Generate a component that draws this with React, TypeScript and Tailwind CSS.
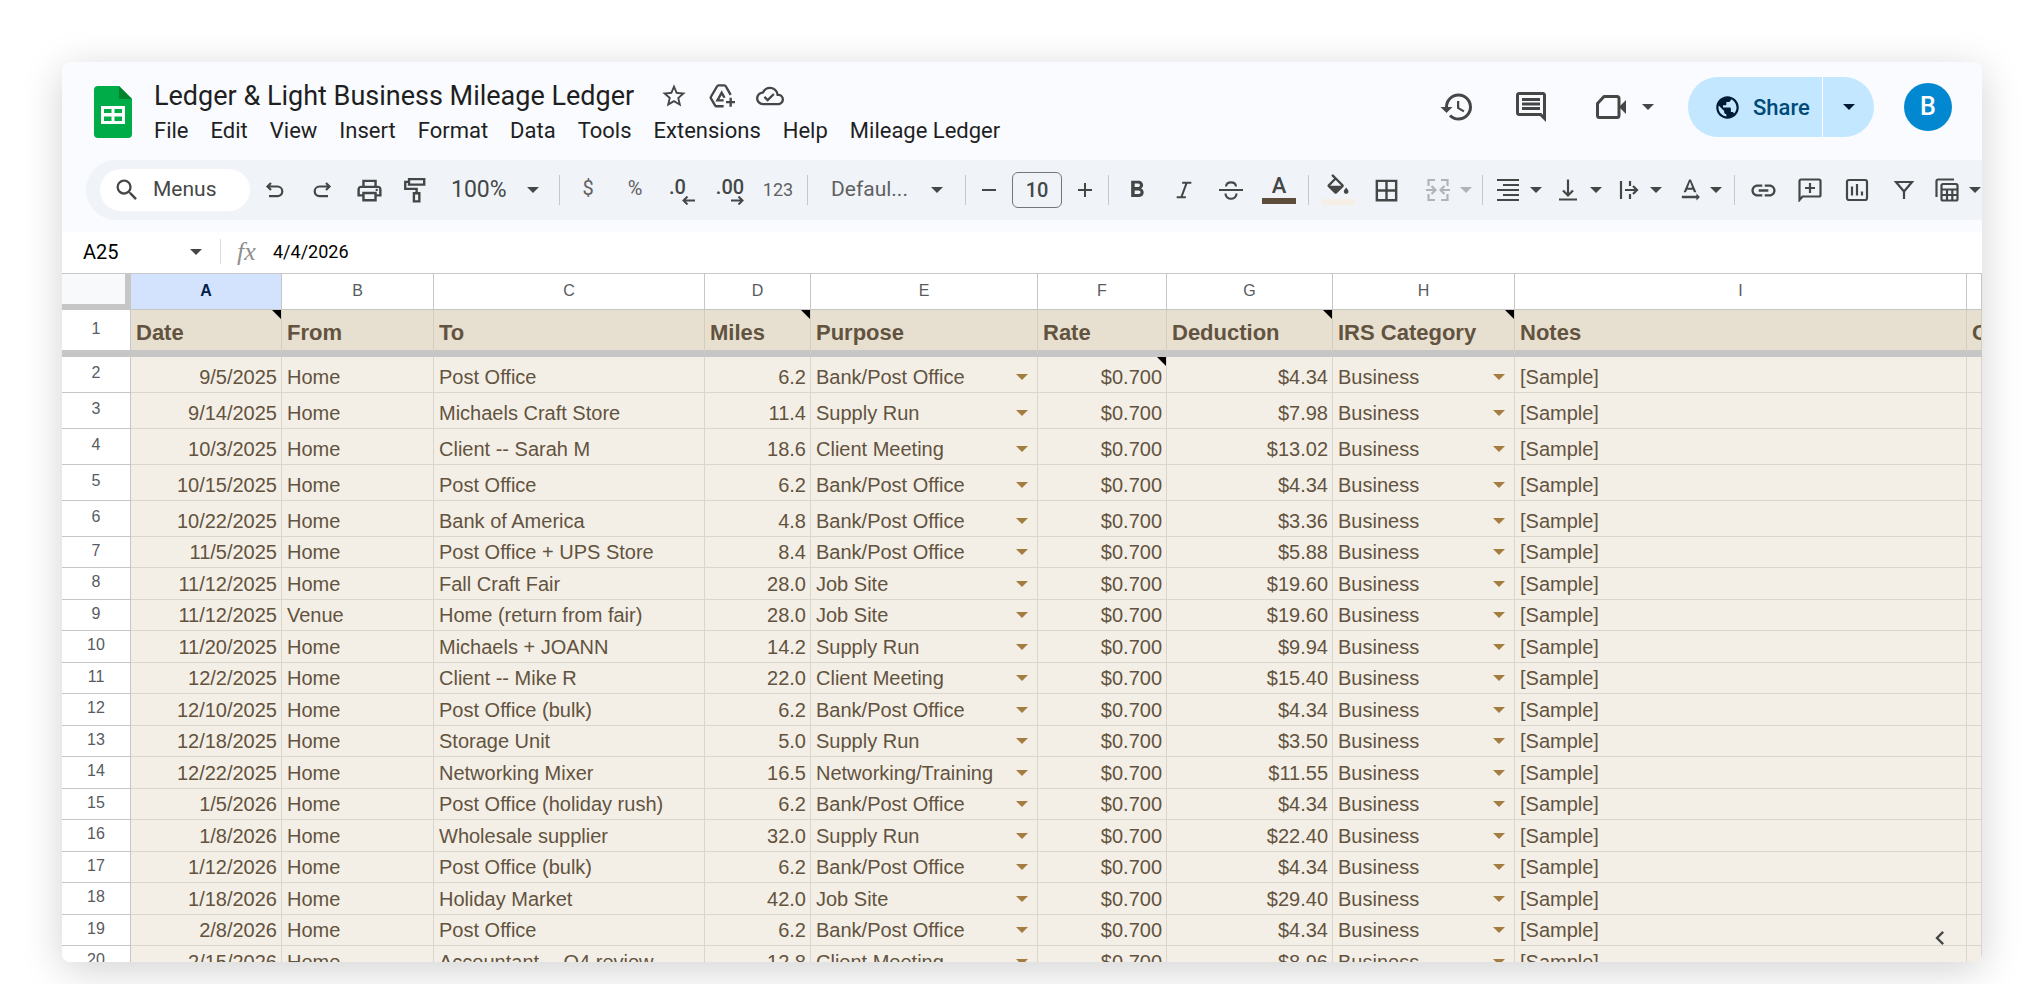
import { ReactNode } from 'react';
import {
  MdAdd, MdBorderAll, MdChevronLeft, MdFormatBold, MdHistory, MdLink, MdOutlineCloudDone,
  MdOutlineComment, MdOutlinePrint, MdPublic, MdRemove, MdSearch, MdStarBorder, MdTextRotationNone,
} from 'react-icons/md';

const menus = ['File', 'Edit', 'View', 'Insert', 'Format', 'Data', 'Tools', 'Extensions', 'Help', 'Mileage Ledger'];

interface Column {
  letter: string;
  title: string;
  width: string;
  note?: boolean;
}

const columns: Column[] = [
  { letter: 'A', title: 'Date', width: 'w-[151px]', note: true },
  { letter: 'B', title: 'From', width: 'w-[152px]' },
  { letter: 'C', title: 'To', width: 'w-[271px]' },
  { letter: 'D', title: 'Miles', width: 'w-[106px]', note: true },
  { letter: 'E', title: 'Purpose', width: 'w-[227px]' },
  { letter: 'F', title: 'Rate', width: 'w-[129px]' },
  { letter: 'G', title: 'Deduction', width: 'w-[166px]', note: true },
  { letter: 'H', title: 'IRS Category', width: 'w-[182px]', note: true },
  { letter: 'I', title: 'Notes', width: 'w-[452px]' },
  { letter: '', title: 'C', width: '' },
];

const trips = [
  ['9/5/2025', 'Home', 'Post Office', '6.2', 'Bank/Post Office', '$4.34'],
  ['9/14/2025', 'Home', 'Michaels Craft Store', '11.4', 'Supply Run', '$7.98'],
  ['10/3/2025', 'Home', 'Client -- Sarah M', '18.6', 'Client Meeting', '$13.02'],
  ['10/15/2025', 'Home', 'Post Office', '6.2', 'Bank/Post Office', '$4.34'],
  ['10/22/2025', 'Home', 'Bank of America', '4.8', 'Bank/Post Office', '$3.36'],
  ['11/5/2025', 'Home', 'Post Office + UPS Store', '8.4', 'Bank/Post Office', '$5.88'],
  ['11/12/2025', 'Home', 'Fall Craft Fair', '28.0', 'Job Site', '$19.60'],
  ['11/12/2025', 'Venue', 'Home (return from fair)', '28.0', 'Job Site', '$19.60'],
  ['11/20/2025', 'Home', 'Michaels + JOANN', '14.2', 'Supply Run', '$9.94'],
  ['12/2/2025', 'Home', 'Client -- Mike R', '22.0', 'Client Meeting', '$15.40'],
  ['12/10/2025', 'Home', 'Post Office (bulk)', '6.2', 'Bank/Post Office', '$4.34'],
  ['12/18/2025', 'Home', 'Storage Unit', '5.0', 'Supply Run', '$3.50'],
  ['12/22/2025', 'Home', 'Networking Mixer', '16.5', 'Networking/Training', '$11.55'],
  ['1/5/2026', 'Home', 'Post Office (holiday rush)', '6.2', 'Bank/Post Office', '$4.34'],
  ['1/8/2026', 'Home', 'Wholesale supplier', '32.0', 'Supply Run', '$22.40'],
  ['1/12/2026', 'Home', 'Post Office (bulk)', '6.2', 'Bank/Post Office', '$4.34'],
  ['1/18/2026', 'Home', 'Holiday Market', '42.0', 'Job Site', '$29.40'],
  ['2/8/2026', 'Home', 'Post Office', '6.2', 'Bank/Post Office', '$4.34'],
  ['2/15/2026', 'Home', 'Accountant -- Q4 review', '12.8', 'Client Meeting', '$8.96'],
];

const rowHeight = (i: number) => {
  if (i < 5) return 'h-[36px]';
  return i % 2 ? 'h-[31px]' : 'h-[32px]';
};

function Glyph({ d, className = 'size-6' }: { d: string; className?: string }) {
  return (
    <svg viewBox="0 0 24 24" fill="none" stroke="currentColor" strokeWidth="2.2" className={`shrink-0 ${className}`} aria-hidden="true">
      <path d={d} />
    </svg>
  );
}

function Tool({ label, className = 'w-12', children }: { label: string; className?: string; children: ReactNode }) {
  return (
    <button type="button" aria-label={label} className={`flex h-10 shrink-0 items-center justify-center ${className}`}>
      {children}
    </button>
  );
}

function DropTool({ label, className = 'ml-[14px]', children }: { label: string; className?: string; children: ReactNode }) {
  return (
    <button type="button" aria-label={label} className={`flex h-10 w-[46px] shrink-0 items-center justify-between ${className}`}>
      {children}
      <Caret />
    </button>
  );
}

function Divider({ className = '' }: { className?: string }) {
  return <span className={`h-[30px] w-px shrink-0 bg-[#c7c7c7] ${className}`} />;
}

function Caret({ className = '' }: { className?: string }) {
  return (
    <svg viewBox="0 0 12 6" className={`h-[6px] w-[12px] shrink-0 fill-current ${className}`} aria-hidden="true">
      <path d="M0 0h12l-6 6z" />
    </svg>
  );
}

function NoteMark() {
  return (
    <svg viewBox="0 0 9 9" className="absolute top-0 right-0 size-[9px]" aria-hidden="true">
      <path d="M0 0h9v9z" />
    </svg>
  );
}

function SheetsLogo() {
  return (
    <svg viewBox="0 0 38 52" className="h-[52px] w-[38px]" aria-hidden="true">
      <path fill="#00ac47" d="M4 0h21l13 13v35a4 4 0 0 1-4 4H4a4 4 0 0 1-4-4V4a4 4 0 0 1 4-4z" />
      <path fill="#00832d" d="M25 0l13 13H25z" />
      <path fill="#fff" fillRule="evenodd" d="M7 20h24v18H7zM10 23v4h7.500v-4zM20.500 23v4H28v-4zM10 30.500v4.500h7.500v-4.500zM20.500 30.500v4.500H28v-4.500z" />
    </svg>
  );
}

function TitleBar() {
  return (
    <header className="flex h-[98px] shrink-0 items-start">
      <div className="mt-6 ml-[32px] shrink-0">
        <SheetsLogo />
      </div>
      <div className="mt-4 ml-[22px] flex flex-col">
        <div className="flex h-9 items-center gap-5 text-[#444746]">
          <h1 className="mr-[6px] text-[27px] leading-9 whitespace-nowrap text-[#1f1f1f]">Ledger &amp; Light Business Mileage Ledger</h1>
          <button type="button" aria-label="Star"><MdStarBorder className="size-7" /></button>
          <button type="button" aria-label="Move">
            <Glyph d="M13.500 21.500H7a1.500 1.500 0 0 1-1.300-.7L1.800 14.200a1.500 1.500 0 0 1 0-1.500L7.500 3A1.500 1.500 0 0 1 8.800 2.200h5.400a1.500 1.500 0 0 1 1.300.8l4.500 8M13.500 16H7.800l3.900-7 2.600 4.600M20 13.500v8.500M15.700 17.700h8.500" className="h-7 w-7 p-px" />
          </button>
          <button type="button" aria-label="Document status"><MdOutlineCloudDone className="size-7" /></button>
        </div>
        <nav className="flex h-8 items-center gap-[22px] text-[22px] text-[#1f1f1f]">
          {menus.map((m) => (
            <button key={m} type="button" className="whitespace-nowrap">{m}</button>
          ))}
        </nav>
      </div>
      <div className="mt-[15px] mr-[30px] ml-auto flex h-[60px] shrink-0 items-center text-[#444746]">
        <button type="button" aria-label="Version history"><MdHistory className="size-9" /></button>
        <button type="button" aria-label="Comments" className="ml-[38px]"><MdOutlineComment className="size-9" /></button>
        <button type="button" aria-label="Join a call" className="ml-[46px] flex items-center gap-4">
          <svg viewBox="0 0 31 26" className="h-[26px] w-[31px]" aria-hidden="true">
            <path d="M9 2.500h13a2 2 0 0 1 2 2v17a2 2 0 0 1-2 2H4.500a2 2 0 0 1-2-2V9.500z" fill="none" stroke="currentColor" strokeWidth="3" strokeLinejoin="round" />
            <path d="M24 13l7-7v14z" fill="currentColor" />
          </svg>
          <Caret />
        </button>
        <div className="ml-[34px] flex h-[60px] overflow-hidden rounded-full bg-[#c2e7ff] text-[#001d35]">
          <button type="button" className="flex w-[135px] items-center gap-3 border-r border-white pl-[26px] text-[22px] font-medium text-[#004a77]">
            <MdPublic className="size-[27px] text-[#001d35]" />
            Share
          </button>
          <button type="button" aria-label="Share options" className="flex w-[51px] items-center justify-center">
            <Caret />
          </button>
        </div>
        <button type="button" aria-label="Account" className="ml-[30px] size-[48px] rounded-full bg-[#0288d1] text-[25px] font-medium text-white">B</button>
      </div>
    </header>
  );
}

function Decimals({ text, arrow, pad = '' }: { text: string; arrow: string; pad?: string }) {
  return (
    <span className="flex flex-col items-end pt-[3px] text-[20px] leading-[18px] font-medium">
      <span className={pad}>{text}</span>
      <svg viewBox="0 0 13 9" className="h-[9px] w-[13px]" fill="none" stroke="currentColor" strokeWidth="2" aria-hidden="true">
        <path d={arrow} />
      </svg>
    </span>
  );
}

function Toolbar() {
  return (
    <div className="ml-6 flex h-[60px] shrink-0 items-center overflow-hidden rounded-l-full bg-[#f0f4f9] pl-[14px] text-[#444746]">
      <label className="flex h-[42px] w-[150px] shrink-0 items-center gap-3 rounded-full bg-white pl-[13px]">
        <MdSearch className="size-[28px] shrink-0" />
        <input aria-label="Menus" placeholder="Menus" className="w-20 bg-transparent text-[21px] outline-none placeholder:text-[#444746]" />
      </label>
      <Tool label="Undo" className="ml-[2px] w-[46px]"><Glyph d="M8 5L4.500 8.500L8 12M5 8.500h9.500a4.800 4.800 0 0 1 0 9.600H6" /></Tool>
      <Tool label="Redo"><Glyph d="M16 5l3.500 3.500L16 12M19 8.500H9.500a4.800 4.800 0 0 0 0 9.600H18" /></Tool>
      <Tool label="Print" className="w-[46px]"><MdOutlinePrint className="size-[29px]" /></Tool>
      <Tool label="Paint format" className="w-[46px]"><Glyph d="M6.500 2h14v5h-14zM6.500 4.500H3V11h10.500v4M11 15h5v7.500h-5z" className="size-[26px]" /></Tool>
      <button type="button" className="ml-[13px] flex w-[88px] shrink-0 items-center justify-between text-[23px]">100%<Caret /></button>
      <Divider className="ml-5" />
      <Tool label="Currency" className="ml-1 w-12 pb-1 text-[20px] text-[#5f6163]">$</Tool>
      <Tool label="Percent" className="w-[46px] pb-1 text-[20px] text-[#5f6163]">%</Tool>
      <Tool label="Decrease decimal places"><Decimals text=".0" pad="pr-[9px]" arrow="M13 4.500H1.500M5.500 0.500l-4 4 4 4" /></Tool>
      <Tool label="Increase decimal places"><Decimals text=".00" arrow="M0 4.500h11.500M7.500 0.500l4 4-4 4" /></Tool>
      <Tool label="More formats" className="w-12 pb-[2px] text-[18px] text-[#5f6163]">123</Tool>
      <Divider className="ml-[5px]" />
      <button type="button" className="ml-[23px] flex w-[112px] shrink-0 items-center justify-between text-[21px] text-[#5f6163]">
        Defaul...
        <Caret className="text-[#444746]" />
      </button>
      <Divider className="ml-[22px]" />
      <Tool label="Decrease font size" className="w-[46px]"><MdRemove className="size-6" /></Tool>
      <input aria-label="Font size" defaultValue="10" className="h-9 w-[50px] shrink-0 rounded-md border border-[#747775] bg-transparent text-center text-[20px] font-medium" />
      <Tool label="Increase font size" className="w-[46px]"><MdAdd className="size-6" /></Tool>
      <Divider />
      <Tool label="Bold" className="ml-1 w-12"><MdFormatBold className="size-7" /></Tool>
      <Tool label="Italic" className="w-[46px]"><Glyph d="M10 4h10M4 20h10M15 4L9 20" className="size-[22px]" /></Tool>
      <Tool label="Strikethrough"><Glyph d="M0 12h24M17 8.500C16.500 3 7.500 3 7 8.500M6.500 15.500C6.500 22.500 17.500 22.500 17.500 15.500" /></Tool>
      <Tool label="Text color" className="w-12 flex-col">
        <span className="text-[22px] leading-6 font-medium">A</span>
        <span className="mb-[2px] h-[6px] w-[34px] bg-[#5c4d3c]" />
      </Tool>
      <Divider className="ml-[5px]" />
      <Tool label="Fill color" className="ml-[5px] w-12 flex-col gap-1">
        <svg viewBox="0 0 24 18" className="h-[21px] w-[28px] fill-current" aria-hidden="true">
          <path d="M16.560 8.940L7.620 0 6.210 1.410l2.380 2.380-5.150 5.150c-.59.59-.59 1.540 0 2.120l5.500 5.500c.29.29.68.44 1.060.44s.77-.15 1.060-.44l5.500-5.500c.59-.58.59-1.530 0-2.120zM5.210 10L10 5.210 14.790 10H5.210zM19 11.500s-2 2.170-2 3.500c0 1.100.9 2 2 2s2-.9 2-2c0-1.330-2-3.500-2-3.500z" />
        </svg>
        <span className="mb-[2px] h-[6px] w-[34px] bg-[#f5efe6]" />
      </Tool>
      <Tool label="Borders"><MdBorderAll className="size-[29px]" /></Tool>
      <DropTool label="Merge cells" className="ml-4 text-[#b1b4b7]">
        <Glyph d="M2.500 8V2h6.500M21.500 8V2h-6.500M2.500 16v6h6.500M21.500 16v6h-6.500M0 12h9M5.500 8l4 4-4 4M24 12h-9M18.500 8l-4 4 4 4" />
      </DropTool>
      <Divider className="ml-[10px]" />
      <DropTool label="Horizontal align" className="ml-[13px]"><Glyph d="M1 2h22M7 7h16M1 12h22M7 17h16M1 22h22" /></DropTool>
      <DropTool label="Vertical align"><Glyph d="M12 1.500v16M7 12.500l5 5 5-5M3 21.500h18" /></DropTool>
      <DropTool label="Text wrapping"><Glyph d="M5 3v18M14 3v5M14 16v5M9 12h12M17 8l4 4-4 4" /></DropTool>
      <DropTool label="Text rotation"><MdTextRotationNone className="size-[28px]" /></DropTool>
      <Divider className="ml-3" />
      <Tool label="Insert link" className="ml-[5px] w-[46px]"><MdLink className="size-[29px]" /></Tool>
      <Tool label="Insert comment"><Glyph d="M1.500 22V3A1.500 1.500 0 0 1 3 1.500h18A1.500 1.500 0 0 1 22.500 3v14a1.500 1.500 0 0 1-1.500 1.500H4.500zM12 5v10M7 10h10" /></Tool>
      <Tool label="Insert chart" className="w-[46px]"><Glyph d="M4 2h16a2 2 0 0 1 2 2v16a2 2 0 0 1-2 2H4a2 2 0 0 1-2-2V4a2 2 0 0 1 2-2zM7 8.500v9M12 6v11.500M17 13.500v4" /></Tool>
      <Tool label="Create a filter"><Glyph d="M4 4h16l-8 9.500zM12 12.500V21" /></Tool>
      <DropTool label="Table views" className="ml-[7px]"><Glyph d="M1.500 19V3A1.500 1.500 0 0 1 3 1.500h16M8 6h13a1.500 1.500 0 0 1 1.500 1.500V21a1.500 1.500 0 0 1-1.500 1.500H8A1.500 1.500 0 0 1 6.500 21V7.500A1.500 1.500 0 0 1 8 6zM6.500 11.500h16M6.500 17h16M12 11.500v11M17.300 11.500v11" /></DropTool>
    </div>
  );
}

function FormulaBar() {
  return (
    <div className="flex h-[42px] shrink-0 items-center border-b border-[#c7c7c7] bg-white pb-[2px] text-[20px] text-black">
      <input aria-label="Name box" defaultValue="A25" className="ml-[21px] w-[107px] outline-none" />
      <Caret className="text-[#444746]" />
      <span className="ml-[18px] h-[25px] w-px bg-[#dadce0]" />
      <span className="ml-4 w-6 font-['Liberation_Serif',serif] text-[26px] leading-7 text-[#8f8f8f] italic">fx</span>
      <input aria-label="Formula" defaultValue="4/4/2026" className="ml-3 min-w-0 flex-1 text-[18px] outline-none" />
    </div>
  );
}

function SelectCell({ text }: { text: string }) {
  return (
    <span className="flex items-center justify-between pr-[5px]">
      {text}
      <Caret className="text-[#a37c3f]" />
    </span>
  );
}

function Sheet() {
  const body = 'border-r border-b border-[#dad5cd] bg-[#f4efe6] pt-0 pr-1 pb-[3px] pl-[5px] align-bottom';
  const rowHead = 'border-r border-b border-[#c6c6c6] bg-white px-0 pt-0 pb-[3px] text-[16px] font-normal text-[#575b5f]';
  return (
    <div className="relative flex-1 overflow-hidden">
      <table className="w-full table-fixed border-separate border-spacing-0 font-['Liberation_Sans',sans-serif] text-[20px] leading-[24px] whitespace-nowrap text-[#625340]">
        <thead>
          <tr className="h-[36px] text-[16px] text-[#575b5f]">
            <th className="w-[69px] border-r-[6px] border-b-[6px] border-[#c6c6c6] bg-[#f8f9fa]" />
            {columns.map((c) => (
              <th
                key={c.letter}
                scope="col"
                className={`overflow-hidden border-r border-b border-[#c6c6c6] px-0 pt-0 pb-[2px] ${c.width} ${
                  c.letter === 'A' ? 'bg-[#d3e3fd] font-bold text-[#041e49]' : 'bg-white font-normal'
                }`}
              >
                {c.letter}
              </th>
            ))}
          </tr>
          <tr className="h-[47px]">
            <th scope="row" className="border-r border-b-[7px] border-[#c6c6c6] bg-white px-0 pt-0 pb-[3px] text-[16px] font-normal text-[#575b5f]">1</th>
            {columns.map((c) => (
              <th key={c.title} scope="col" className="relative overflow-hidden border-r border-b-[7px] border-r-[#d5ccbc] border-b-[#c6c6c6] bg-[#e7dfcf] px-[5px] pb-[5px] text-left align-bottom text-[22px] font-bold">
                {c.title}
                {c.note && <NoteMark />}
              </th>
            ))}
          </tr>
        </thead>
        <tbody>
          {trips.map(([date, from, to, miles, purpose, deduction], i) => (
            <tr key={i} className={rowHeight(i)}>
              <th scope="row" className={rowHead}>{i + 2}</th>
              <td className={`${body} text-right`}>{date}</td>
              <td className={body}>{from}</td>
              <td className={body}>{to}</td>
              <td className={`${body} text-right`}>{miles}</td>
              <td className={body}><SelectCell text={purpose} /></td>
              <td className={`${body} relative text-right`}>
                $0.700
                {i === 0 && <NoteMark />}
              </td>
              <td className={`${body} text-right`}>{deduction}</td>
              <td className={body}><SelectCell text="Business" /></td>
              <td className={body}>[Sample]</td>
              <td className={body} />
            </tr>
          ))}
        </tbody>
      </table>
      <button type="button" aria-label="Show side panel" className="absolute right-7 bottom-[10px] text-[#444746]">
        <MdChevronLeft className="size-7" />
      </button>
    </div>
  );
}

export default function App() {
  return (
    <main className="flex h-screen flex-col bg-white px-[62px] pt-[62px] pb-[22px] font-[Roboto,sans-serif]">
      <section className="flex min-h-0 flex-1 flex-col overflow-hidden rounded-lg bg-[#f9fbff] shadow-[0_8px_40px_rgba(0,0,0,0.18)]">
        <TitleBar />
        <Toolbar />
        <div className="h-3 shrink-0" />
        <FormulaBar />
        <Sheet />
      </section>
    </main>
  );
}
